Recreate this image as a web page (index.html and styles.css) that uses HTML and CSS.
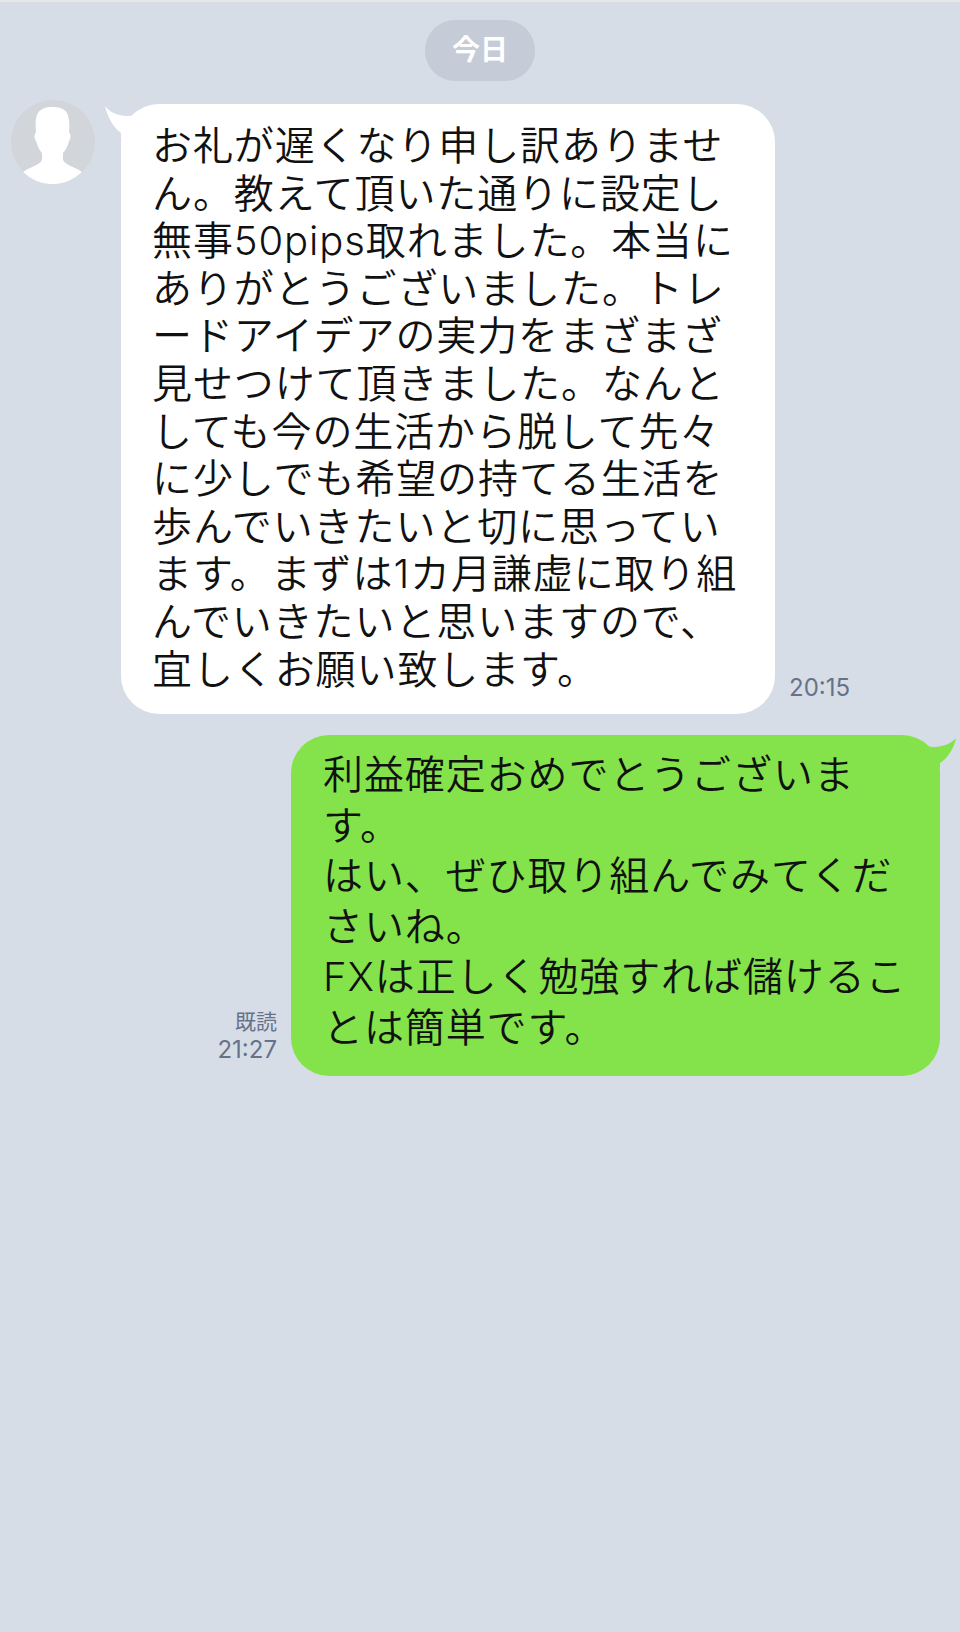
FILE: index.html
```html
<!DOCTYPE html>
<html lang="ja">
<head>
    <meta charset="utf-8">
    <link rel="stylesheet" href="styles.css">
    <title>Talk</title>
</head>
<body>
<div class="chat">
    <div class="date-row"><span class="date-pill">今日</span></div>

    <div class="row row-left">
        <svg class="avatar" viewBox="0 0 84 84">
            <circle cx="42" cy="42" r="42" fill="#d2d5da"/>
            <path d="M12 72C20 66 28 66 31 60L31 53C28 50 26 44 25 41C23 39 23 34 25 32C24 22 25 16 27 13C30 8 36 7 41 7C47 7 53 8 56 13C58 17 59 24 58 32C60 34 60 39 58 41C57 45 55 50 52 53L52 60C55 66 63 66 71 72A42 42 0 0 1 12 72Z" fill="#fff"/>
        </svg>
        <div class="bubble bubble-white">
            <svg class="tail tail-left" viewBox="0 0 46 34"><path d="M0 2C6 10 18 14 30 11L46 11L46 34L16 34L16 29C8 23 2 12 0 2Z" fill="#fff"/></svg>
            <p>お礼が遅くなり申し訳ありませ<br>ん。教えて頂いた通りに設定し<br>無事50pips取れました。本当に<br>ありがとうございました。トレ<br>ードアイデアの実力をまざまざ<br>見せつけて頂きました。なんと<br>しても今の生活から脱して先々<br>に少しでも希望の持てる生活を<br>歩んでいきたいと切に思ってい<br>ます。まずは1カ月謙虚に取り組<br>んでいきたいと思いますので、<br>宜しくお願い致します。</p>
        </div>
        <div class="meta"><span class="time">20:15</span></div>
    </div>

    <div class="row row-right">
        <div class="meta meta-right">
            <span class="read">既読</span>
            <span class="time">21:27</span>
        </div>
        <div class="bubble bubble-green">
            <svg class="tail tail-right" viewBox="0 0 46 34"><path d="M46 3C40 10 28 14 16 11L0 11L0 34L30 34L30 28C38 23 44 13 46 3Z" fill="#84e34b"/></svg>
            <p>利益確定おめでとうございま<br>す。<br>はい、ぜひ取り組んでみてくだ<br>さいね。<br>FXは正しく勉強すれば儲けるこ<br>とは簡単です。</p>
        </div>
    </div>
</div>
</body>
</html>
```
FILE: styles.css
```css
html, body {
  margin: 0;
  padding: 0;
}

body {
  background-color: #d7dde6;
  font-family: "Inter", "Noto Sans CJK JP", sans-serif;
}

.chat {
  width: 960px;
  height: 1632px;
  padding-top: 20px;
  box-sizing: border-box;
  border-top: 2px solid #e6e8e6;
  overflow: hidden;
}

.date-row {
  display: flex;
  justify-content: center;
  margin-top: -2px;
}

.date-pill {
  width: 110px;
  height: 61px;
  line-height: 61px;
  text-align: center;
  border-radius: 30px;
  background-color: #c5ccd7;
  color: #ffffff;
  font-size: 28px;
  font-weight: 700;
}

.row {
  display: flex;
  align-items: flex-end;
}

.row-left {
  margin-top: 23px;
  padding-left: 11px;
}

.row-right {
  margin-top: 21px;
  justify-content: flex-end;
  padding-right: 20px;
}

.avatar {
  width: 84px;
  height: 84px;
  align-self: flex-start;
  margin-top: -4px;
  margin-right: 26px;
}

.bubble {
  position: relative;
  border-radius: 38px;
  color: #111111;
}

.bubble p {
  position: relative;
  margin: 0;
  font-size: 40px;
  font-weight: 350;
  letter-spacing: 0.9px;
  white-space: nowrap;
}

.bubble-white {
  width: 654px;
  height: 610px;
  box-sizing: border-box;
  padding: 18px 0 0 31px;
  background-color: #ffffff;
}

.bubble-white p {
  line-height: 47.6px;
}

.bubble-green {
  width: 649px;
  height: 341px;
  box-sizing: border-box;
  padding: 15px 0 0 32px;
  background-color: #84e34b;
}

.bubble-green p {
  line-height: 50.6px;
}

.tail {
  position: absolute;
  top: 0;
  width: 46px;
  height: 34px;
}

.tail-left {
  left: -16px;
}

.tail-right {
  right: -16px;
}

.meta {
  display: flex;
  flex-direction: column;
  margin-left: 14px;
  margin-bottom: 12px;
  color: #66728a;
  font-size: 24px;
  line-height: 28px;
}

.meta-right {
  align-items: flex-end;
  margin: 0 14px 12px 0;
}

.read {
  font-size: 21px;
}
```
